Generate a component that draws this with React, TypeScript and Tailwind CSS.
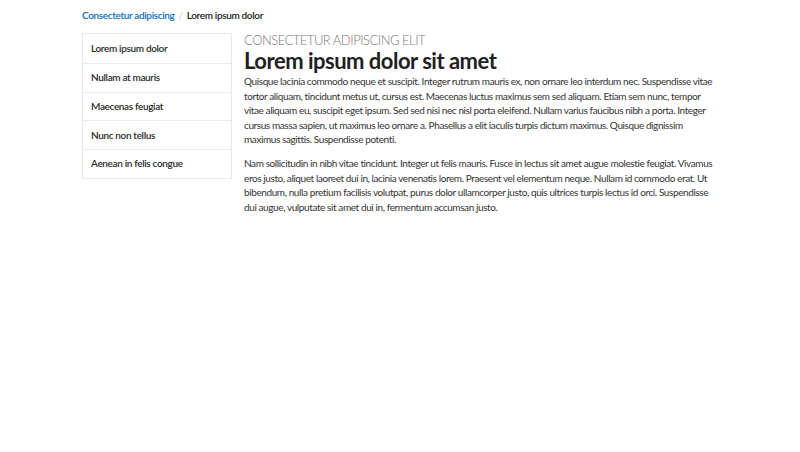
const items = [
  "Lorem ipsum dolor",
  "Nullam at mauris",
  "Maecenas feugiat",
  "Nunc non tellus",
  "Aenean in felis congue",
];

const firstParagraph = [
  "Quisque lacinia commodo neque et suscipit. Integer rutrum mauris ex, non ornare leo interdum nec. Suspendisse vitae",
  "tortor aliquam, tincidunt metus ut, cursus est. Maecenas luctus maximus sem sed aliquam. Etiam sem nunc, tempor",
  "vitae aliquam eu, suscipit eget ipsum. Sed sed nisi nec nisl porta eleifend. Nullam varius faucibus nibh a porta. Integer",
  "cursus massa sapien, ut maximus leo ornare a. Phasellus a elit iaculis turpis dictum maximus. Quisque dignissim",
  "maximus sagittis. Suspendisse potenti.",
];

const secondParagraph = [
  "Nam sollicitudin in nibh vitae tincidunt. Integer ut felis mauris. Fusce in lectus sit amet augue molestie feugiat. Vivamus",
  "eros justo, aliquet laoreet dui in, lacinia venenatis lorem. Praesent vel elementum neque. Nullam id commodo erat. Ut",
  "bibendum, nulla pretium facilisis volutpat, purus dolor ullamcorper justo, quis ultrices turpis lectus id orci. Suspendisse",
  "dui augue, vulputate sit amet dui in, fermentum accumsan justo.",
];

const Paragraph = ({ lines, className = "" }: { lines: string[]; className?: string }) => (
  <p className={`text-[10px] leading-[14.6px] tracking-[-0.4px] text-[#333] ${className}`}>
    {lines.map((line) => (
      <span key={line} className="block whitespace-nowrap">
        {line}
      </span>
    ))}
  </p>
);

export default function App() {
  return (
    <div className="min-h-screen bg-white text-[#363636] font-['Lato',sans-serif]">
      <div className="mx-auto w-[636px] pt-[8px]">
        {/* Breadcrumb */}
        <nav className="flex items-center gap-[4px] text-[10px] tracking-[-0.35px] font-semibold h-[14px]">
          <span className="text-[#0a6ebd]">Consectetur adipiscing</span>
          <span className="text-[#cfcfcf] font-normal">/</span>
          <span className="text-[#222]">Lorem ipsum dolor</span>
        </nav>

        <div className="mt-[11px] flex gap-[12px]">
          {/* Sidebar */}
          <ul className="w-[150px] shrink-0 self-start border border-[#e8e8e8]">
            {items.map((item, i) => (
              <li
                key={item}
                className={`h-[28.75px] flex items-center px-[8px] text-[10px] tracking-[-0.35px] font-semibold text-[#2b2b2b] ${
                  i > 0 ? "border-t border-[#ececec]" : ""
                }`}
              >
                {item}
              </li>
            ))}
          </ul>

          {/* Content */}
          <div className="flex-1">
            <div className="text-[13px] leading-[15px] tracking-[-0.5px] font-light text-[#7a7a7a]">
              CONSECTETUR ADIPISCING ELIT
            </div>
            <h1 className="text-[22px] leading-[25px] font-bold text-[#1f1f1f] tracking-[-0.5px]">
              Lorem ipsum dolor sit amet
            </h1>
            <Paragraph lines={firstParagraph} className="mt-[1px]" />
            <Paragraph lines={secondParagraph} className="mt-[9px]" />
          </div>
        </div>
      </div>
    </div>
  );
}
